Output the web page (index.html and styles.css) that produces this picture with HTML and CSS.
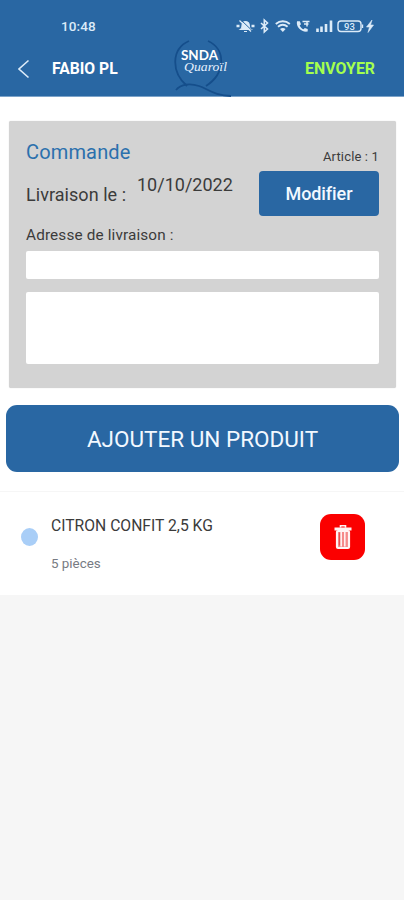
FILE: index.html
```html
<!DOCTYPE html>
<html lang="fr">
<head>
<meta charset="utf-8">
<title>Commande</title>
<link rel="stylesheet" href="styles.css">
</head>
<body>
<header class="header">
  <div class="status">
    <span class="time">10:48</span>
    <svg class="status-icons" width="140" height="18" viewBox="0 0 140 18" fill="none" stroke="#dcebf8" stroke-width="1.4">
      <path d="M4.500 12.500h10.500c-1.500-1-1.700-2-1.700-3.500 0-2.500-1-4.500-3.600-4.500S6 6.500 6 9c0 1.500 0 2.500-1.500 3.500zM8 14.500h3" fill="#dcebf8" stroke-width="1.200"/>
      <path d="M.5 9h3M15.500 9h3" stroke-width="2.400"/>
      <path d="M5 3l11 10.500" stroke="#2967a3" stroke-width="1"/><path d="M3.500 3.500l11.500 11" stroke-width="1.200"/>
      <path d="M25 6l6.500 6L28.300 15V3l3.200 3L25 12" stroke-width="1.600"/>
      <path d="M39.800 7c4.200-3.600 9.800-3.600 14 0M42 9.800c3-2.600 6.600-2.600 9.600 0" stroke-width="1.900"/>
      <path d="M44 12c1.800-1.300 3.800-1.300 5.600 0l-2.800 3z" fill="#dcebf8" stroke="none"/>
      <path d="M61 4.200h2.800l1.200 3-1.300 1.200c.8 1.900 2 3.100 3.800 3.900l1.300-1.300 2.900 1v2.500c-5.700 1.200-12-4.300-10.700-10.300z" fill="#dcebf8" stroke="none"/>
      <path d="M66.500 4.500h7M68 7h4.500M71 5v4.500" stroke-width="1.500"/>
      <path d="M81.500 11.500V15M85.500 9.500V15M90 7v8M95 3.500V15" stroke-width="2.600"/>
      <rect x="102" y="4" width="23" height="10.500" rx="3"/>
      <path d="M126.500 7.500v3.500"/>
      <text class="battery" x="113.500" y="12.700" text-anchor="middle">93</text>
      <path d="M136 3l-5.500 7h3l-1.500 5.500 5.500-7.500h-3z" fill="#dcebf8" stroke="#dcebf8" stroke-width=".6"/>
    </svg>
  </div>
  <nav class="nav">
    <svg class="back" width="12" height="20" viewBox="0 0 12 20" fill="none" stroke="#dcebf8" stroke-width="1.600"><path d="M10.500 1.500L1 10l9.500 8.500"/></svg>
    <span class="client">FABIO PL</span>
    <svg class="logo" width="70" height="62" viewBox="0 0 70 62">
      <g fill="none" stroke="#154e8b">
        <path d="M15 5C-3 13-3 36 13 50" stroke-width="1.800"/>
        <path d="M34 5C52 13 52 37 32 50" stroke-width="1.800"/>
        <path d="M2 54c5-6 14-7 23-4 9 3 16 10 32 10" stroke-width="1.800"/>
      </g>
      <text class="logo-top" x="7" y="23.500" textLength="37" lengthAdjust="spacingAndGlyphs">SNDA</text>
      <text class="logo-bottom" x="10" y="35" textLength="43" lengthAdjust="spacingAndGlyphs">Quaroïl</text>
    </svg>
    <span class="send">ENVOYER</span>
  </nav>
</header>
<main class="main">
  <section class="card">
    <div class="title-row"><h1 class="title">Commande</h1><span class="count">Article : 1</span></div>
    <div class="date-row">
      <span class="date-label">Livraison le :</span>
      <span class="date">10/10/2022</span>
      <button class="edit">Modifier</button>
    </div>
    <div class="address-label">Adresse de livraison :</div>
    <div class="field"></div>
    <div class="field field-large"></div>
  </section>
  <button class="add">AJOUTER UN PRODUIT</button>
  <article class="item">
    <span class="dot"></span>
    <div class="item-text">
      <div class="item-name">CITRON CONFIT 2,5 KG</div>
      <div class="item-qty">5 pièces</div>
    </div>
    <button class="delete" aria-label="Supprimer">
      <svg width="20" height="26" viewBox="0 0 20 26" fill="none" stroke="#fff4f4">
        <path d="M7.500 3.500V1.800h5v2" stroke-width="1.600"/>
        <path d="M1.500 5h17" stroke-width="3"/>
        <rect x="4" y="7" width="12" height="17" rx="1" fill="#f58a8a" stroke-width="2.200"/>
        <path d="M8.200 8v14.500M11.800 8v14.500" stroke-width="1.500"/>
        <path d="M6.300 8.500v13" stroke="#e84040" stroke-width="1"/>
      </svg>
    </button>
  </article>
</main>
</body>
</html>
```

FILE: styles.css
```css
* { box-sizing: border-box; }
body { margin: 0; min-height: 900px; background: #f6f6f6; font-family: Roboto, "Liberation Sans", sans-serif; color: #3b3b3b; }
button { border: 0; padding: 0; font-family: inherit; color: #f2f8ff; background: #2967a3; }
.header { height: 97px; background: #2967a3; border-bottom: 1px solid #7ca3c9; color: #fff; }
.status { height: 38px; padding: 17px 28px 0 61px; display: flex; justify-content: space-between; }
.time { font-size: 13.500px; line-height: 19px; font-weight: 500; color: #dcebf8; letter-spacing: .1px; }
.status-icons { display: block; }
.battery { font: 500 9.500px Roboto, sans-serif; fill: #dcebf8; stroke: none; }
.nav { height: 58px; padding: 0 29px 0 18px; display: flex; align-items: flex-start; }
.back { margin-top: 21px; }
.client { width: 122px; margin: 21px 0 0 22px; font-size: 15.700px; line-height: 20px; font-weight: 700; }
.logo { margin-top: -2px; }
.logo-top { font: 700 13px Lato, sans-serif; fill: #fff; }
.logo-bottom { font: italic 13.500px/1 "Liberation Serif", serif; fill: #e7f2ff; }
.send { margin: 21px 0 0 auto; font-size: 15.900px; line-height: 20px; font-weight: 700; color: #a4ff4f; }
.main { background: #fff; height: 498px; padding-top: 24px; }
.card { height: 267px; margin: 0 8px 0 9px; padding: 20px 17px 0; background: #d3d3d3; border-radius: 2px; box-shadow: 0 0 1px #ccc; }
.title-row { height: 30px; display: flex; justify-content: space-between; }
.title { margin: 0; font-size: 20px; line-height: 23px; font-weight: 400; color: #2b70ad; letter-spacing: .15px; }
.count { font-size: 13px; line-height: 16px; margin-top: 8px; letter-spacing: .15px; }
.date-row { height: 45px; display: flex; align-items: flex-start; }
.date-label { width: 111px; margin-top: 12px; font-size: 18px; line-height: 24px; letter-spacing: .05px; }
.date { margin-top: 2px; font-size: 18px; line-height: 24px; }
.edit { width: 120px; height: 45px; margin-left: auto; border-radius: 4px; font-size: 18px; font-weight: 500; letter-spacing: -.1px; }
.address-label { margin-top: 8px; height: 27px; font-size: 15.300px; line-height: 22px; letter-spacing: .15px; }
.field { height: 28px; background: #fff; border-radius: 2px; }
.field-large { height: 72px; margin-top: 13px; }
.add { display: block; width: 393px; height: 67px; margin: 17px 0 0 6px; border-radius: 11px; font-size: 22.500px; }
.item { height: 104px; margin-top: 19px; padding: 22px 39px 0 21px; border-top: 1px solid #f6f6f6; display: flex; }
.dot { width: 17px; height: 18px; margin-top: 14px; border-radius: 50%; background: #a9cef7; }
.item-text { margin: 2px 0 0 13px; }
.item-name { font-size: 15.700px; line-height: 20px; }
.item-qty { margin-top: 19px; font-size: 13.400px; line-height: 18px; color: #777b83; }
.delete { width: 45px; height: 46px; margin-left: auto; border-radius: 11px; background: #fb0000; display: flex; align-items: center; justify-content: center; }
```
